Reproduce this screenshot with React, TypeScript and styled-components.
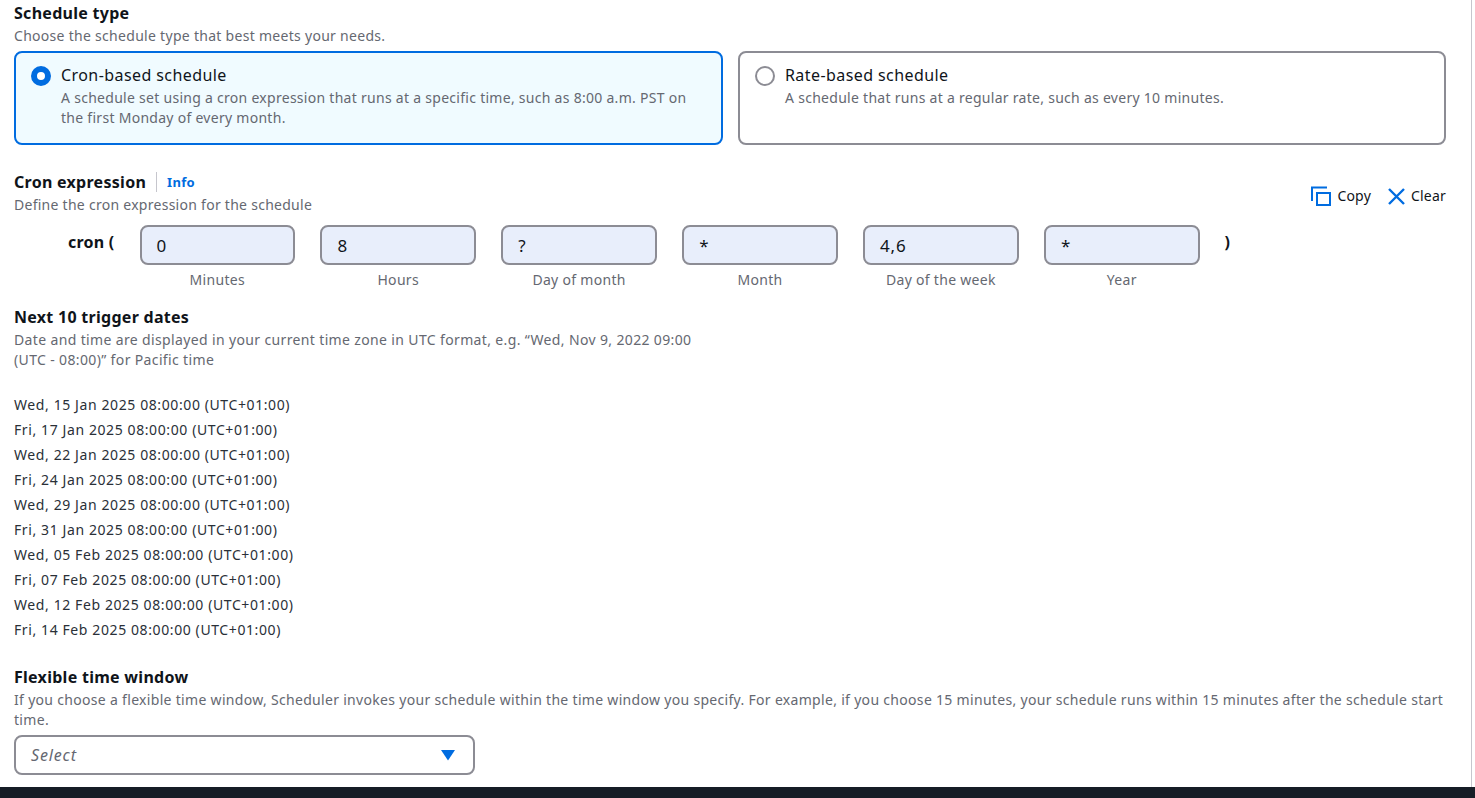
import React from 'react';
import styled, { createGlobalStyle } from 'styled-components';

const Global = createGlobalStyle`
  html, body { margin: 0; padding: 0; background: #fff; height: 100%; overflow: hidden; }
  body { font-family: "Noto Sans", "Open Sans", sans-serif; color: #0f141a; font-size: 14px; line-height: 20px; }
`;
const Page = styled.div`
  width: 1475px; height: 798px; display: flex; flex-direction: column; box-sizing: border-box; overflow: hidden;
`;
const Body = styled.div`
  flex: 1; min-height: 0; display: flex;
`;
const Content = styled.main`
  width: 1472px; box-sizing: border-box; padding: 3px 25px 0 14px; border-right: 1px solid #c6c6cd;
`;
const Footer = styled.div`height: 11px; background: #161d26;`;
const Heading = styled.div`font-weight: 700; font-size: 16px; letter-spacing: 0.28px; line-height: 20px; color: #0f141a;`;
const Hint = styled.div<{ $ls?: number }>`
  font-size: 14px; letter-spacing: ${p => p.$ls ?? 0.29}px; line-height: 20px; color: #656871; margin-top: 3px;
`;
const Cards = styled.div`display: grid; grid-template-columns: 709px 708px; gap: 15px; margin-top: 5px;`;
const Card = styled.div<{ $on?: boolean }>`
  height: 94px; box-sizing: border-box; border-radius: 8px; border: 2px solid ${p => (p.$on ? '#006ce0' : '#8c8c94')};
  background: ${p => (p.$on ? '#f0fbff' : '#fff')}; padding: 12px 20px 0 15px; display: flex; gap: 10px;
`;
const Radio = styled.div<{ $on?: boolean }>`
  width: 20px; height: 20px; margin-top: 1px; flex: none; box-sizing: border-box; border-radius: 50%; background: #fff;
  border: ${p => (p.$on ? '6px solid #006ce0' : '2px solid #8c8c94')};
`;
const CardTitle = styled.div`font-size: 16px; letter-spacing: 0.42px; line-height: 20px; color: #0f141a;`;
const CardDesc = styled.div`font-size: 14px; letter-spacing: 0.28px; line-height: 20px; color: #656871; margin-top: 3px;`;
const CronHead = styled.div`display: flex; justify-content: space-between; margin-top: 27px; height: 53px;`;
const TitleRow = styled.div`display: flex; align-items: center; height: 20px;`;
const Info = styled.span`
  font-weight: 700; font-size: 13px; letter-spacing: 0.3px; color: #006ce0; margin-left: 10px; padding-left: 10px; border-left: 1px solid #c6c6cd; line-height: 20px;
`;
const Actions = styled.div`display: flex; gap: 17px; align-items: center; height: 24px; margin-top: 12px;`;
const Action = styled.div`display: flex; align-items: center; gap: 6px; font-size: 14px; letter-spacing: 0.2px; color: #0f141a;`;
const CronRow = styled.div`display: flex; align-items: flex-start;`;
const CronText = styled.div`
  width: 125.5px; box-sizing: border-box; padding-left: 54px; font-weight: 700; font-size: 16px; letter-spacing: 0.2px; line-height: 34px; height: 34px; white-space: pre;
`;
const Fields = styled.div`display: flex; gap: 25.3px;`;
const Field = styled.div`width: 155.6px; display: flex; flex-direction: column; align-items: center;`;
const CronInput = styled.div`
  width: 100%; height: 40px; box-sizing: border-box; border: 2px solid #8c8c94; border-radius: 8px; background: #e8eefb;
  padding-left: 15px; font-size: 17px; letter-spacing: 0.8px; line-height: 37px; color: #0f141a;
`;
const FieldLabel = styled.div`font-size: 14px; letter-spacing: 0.3px; line-height: 20px; color: #656871; margin-top: 5px;`;
const Close = styled.div`margin-left: 25px; font-weight: 700; font-size: 16px; line-height: 34px;`;
const Section = styled.div<{ $top: number }>`margin-top: ${p => p.$top}px;`;
const Dates = styled.div`margin-top: 25px; display: flex; flex-direction: column; gap: 5px;`;
const DateLine = styled.div`font-size: 14px; letter-spacing: 0.6px; line-height: 20px; color: #2a3038;`;
const Narrow = styled.div`max-width: 690px;`;
const SelectBox = styled.div`
  width: 461px; height: 40px; box-sizing: border-box; border: 2px solid #8c8c94; border-radius: 8px; margin-top: 5px; background: #fff;
  display: flex; align-items: center; justify-content: space-between; padding: 0 18px 0 15px;
  font-style: italic; font-size: 16px; letter-spacing: 0.85px; color: #656871;
`;

const dates = [
  'Wed, 15 Jan 2025', 'Fri, 17 Jan 2025', 'Wed, 22 Jan 2025', 'Fri, 24 Jan 2025', 'Wed, 29 Jan 2025',
  'Fri, 31 Jan 2025', 'Wed, 05 Feb 2025', 'Fri, 07 Feb 2025', 'Wed, 12 Feb 2025', 'Fri, 14 Feb 2025',
];
const fields = [['0', 'Minutes'], ['8', 'Hours'], ['?', 'Day of month'], ['*', 'Month'], ['4,6', 'Day of the week'], ['*', 'Year']];

export default function App() {
  return (
    <Page>
      <Global />
      <Body>
        <Content>
          <Heading>Schedule type</Heading>
          <Hint>Choose the schedule type that best meets your needs.</Hint>
          <Cards>
            <Card $on>
              <Radio $on />
              <div>
                <CardTitle>Cron-based schedule</CardTitle>
                <CardDesc>A schedule set using a cron expression that runs at a specific time, such as 8:00 a.m. PST on the first Monday of every month.</CardDesc>
              </div>
            </Card>
            <Card>
              <Radio />
              <div>
                <CardTitle>Rate-based schedule</CardTitle>
                <CardDesc>A schedule that runs at a regular rate, such as every 10 minutes.</CardDesc>
              </div>
            </Card>
          </Cards>
          <CronHead>
            <div>
              <TitleRow><Heading>Cron expression</Heading><Info>Info</Info></TitleRow>
              <Hint $ls={0.27}>Define the cron expression for the schedule</Hint>
            </div>
            <Actions>
              <Action>
                <svg width="20" height="20" viewBox="0 0 20 20" fill="none" stroke="#006ce0" strokeWidth="2">
                  <path d="M1 15V1.5h15" />
                  <rect x="6" y="7" width="13" height="12" />
                </svg>
                Copy
              </Action>
              <Action>
                <svg width="17" height="17" viewBox="0 0 17 17" fill="none" stroke="#006ce0" strokeWidth="2.4">
                  <path d="M1 1l15 15M16 1L1 16" />
                </svg>
                Clear
              </Action>
            </Actions>
          </CronHead>
          <CronRow>
            <CronText>cron (</CronText>
            <Fields>
              {fields.map(([v, l], i) => (
                <Field key={i}>
                  <CronInput>{v}</CronInput>
                  <FieldLabel>{l}</FieldLabel>
                </Field>
              ))}
            </Fields>
            <Close>)</Close>
          </CronRow>
          <Section $top={17}>
            <Heading>Next 10 trigger dates</Heading>
            <Narrow><Hint $ls={0.36}>Date and time are displayed in your current time zone in UTC format, e.g. “Wed, Nov 9, 2022 09:00 (UTC - 08:00)” for Pacific time</Hint></Narrow>
            <Dates>
              {dates.map(d => <DateLine key={d}>{d} 08:00:00 (UTC+01:00)</DateLine>)}
            </Dates>
          </Section>
          <Section $top={27}>
            <Heading>Flexible time window</Heading>
            <Hint $ls={0.31}>If you choose a flexible time window, Scheduler invokes your schedule within the time window you specify. For example, if you choose 15 minutes, your schedule runs within 15 minutes after the schedule start time.</Hint>
            <SelectBox>
              Select
              <svg width="14" height="11" viewBox="0 0 14 11"><path d="M0 0h14L7 10.5z" fill="#006ce0" /></svg>
            </SelectBox>
          </Section>
        </Content>
      </Body>
      <Footer />
    </Page>
  );
}
